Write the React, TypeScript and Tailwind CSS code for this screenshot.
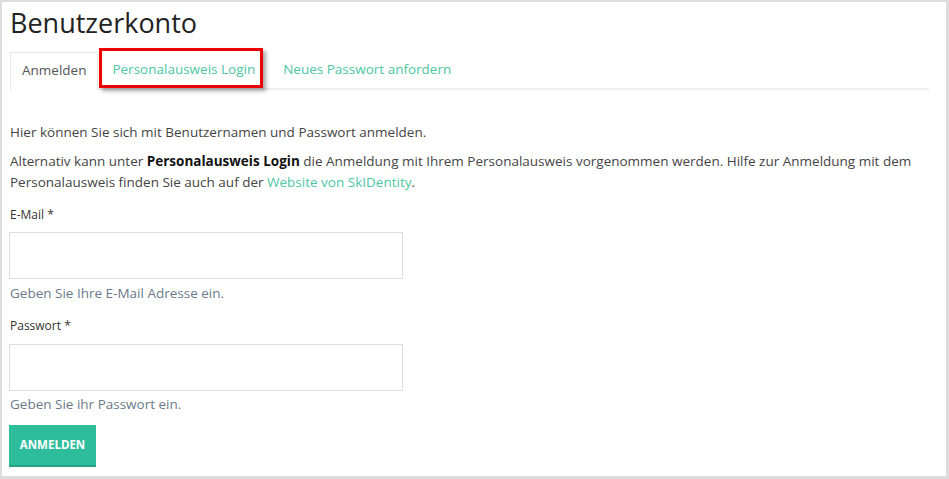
import React from "react";

export default function App() {
  return (
    <div
      className="w-[949px] h-[479px] bg-white border-[#dcdcdc] border-t-2 border-l-2 border-r-[3px] border-b-[3px] box-border overflow-hidden"
      style={{ fontFamily: "'Open Sans', 'Liberation Sans', sans-serif" }}
    >
      <div className="pl-[7px] pr-[17px]">
        <h1 className="text-[27px] leading-[34px] text-[#222] pt-[4px] pl-[1px]">Benutzerkonto</h1>
        <div className="mt-[12px] flex items-end border-b-2 border-[#eeeeee] h-[38px] ml-[1px] relative text-[13.5px]">
          <div className="h-[38px] -mb-[2px] bg-white border border-b-0 border-[#e6e6e6] px-[11px] pb-[3px] flex items-center text-[#555]">
            Anmelden
          </div>
          <div className="h-[36px] pl-[14px] pr-[8px] pb-[1px] flex items-center text-[#4cc6a4] relative">
            <div className="absolute left-[1px] right-0 top-[-4px] bottom-0 border-[3px] border-[#ee0000] shadow-[3px_3px_4px_rgba(0,0,0,0.35)]"></div>
            Personalausweis Login
          </div>
          <div className="h-[36px] pl-[20px] pb-[1px] flex items-center text-[#4cc6a4]">Neues Passwort anfordern</div>
        </div>
        <div className="text-[13.5px] text-[#444] pl-[1px]">
          <p className="mt-[32px] leading-[21px]">Hier können Sie sich mit Benutzernamen und Passwort anmelden.</p>
          <p className="mt-[8px] leading-[21px]">
            Alternativ kann unter <b className="text-[#111]">Personalausweis Login</b> die Anmeldung mit Ihrem Personalausweis vorgenommen werden. Hilfe zur Anmeldung mit dem
            <br />
            Personalausweis finden Sie auch auf der <span className="text-[#4cc6a4]">Website von SkIDentity</span>.
          </p>
          <div className="mt-[13px] text-[12px] text-[#333] leading-[18px]">E-Mail *</div>
          <div className="mt-[8px] -ml-[1px] w-[394px] h-[47px] border border-[#dddddd] bg-white"></div>
          <div className="mt-[4px] text-[13.5px] text-[#6a7a8b] leading-[20px]">Geben Sie Ihre E-Mail Adresse ein.</div>
          <div className="mt-[14px] text-[12px] text-[#333] leading-[18px]">Passwort *</div>
          <div className="mt-[9px] -ml-[1px] w-[394px] h-[47px] border border-[#dddddd] bg-white"></div>
          <div className="mt-[3px] text-[13.5px] text-[#6a7a8b] leading-[20px]">Geben Sie ihr Passwort ein.</div>
          <button className="mt-[11px] -ml-[1px] w-[87px] h-[42px] bg-[#2ebd9b] border-b-2 border-[#27a487] text-white text-[11.5px] font-bold">
            ANMELDEN
          </button>
        </div>
      </div>
    </div>
  );
}
